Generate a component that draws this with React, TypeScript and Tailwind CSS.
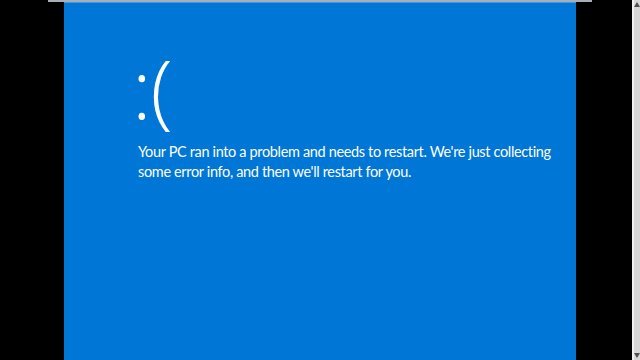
export default function App() {
  return (
    <div className="w-[640px] h-[360px] bg-black flex overflow-hidden">
      <div className="flex-1 flex flex-col">
        {/* thin window edge on top */}
        <div className="h-[2px] ml-[48px] mr-[40px] bg-[#a9adb8]" />
        <div className="flex-1 flex ml-[64px] mr-[56px]">
          <main className="flex-1 bg-[#0076d6] flex flex-col border-t border-[#3d9be6] pl-[74px] pt-[44px] text-white font-['Lato',sans-serif]">
            <div className="-ml-[6px] text-[82px] leading-[80px] font-light tracking-[-1px] font-['Open_Sans',sans-serif]">:(</div>
            <p className="mt-[15px] text-[14.5px] leading-[20px] font-normal tracking-[-0.35px] w-[425px]">
              Your PC ran into a problem and needs to restart. We're just collecting some error info,
              and then we'll restart for you.
            </p>
          </main>
        </div>
      </div>
      <aside className="w-[8px] bg-[#d6d6d6] border-l-2 border-[#f0f0f0] flex flex-col justify-between items-center py-[2px]">
        <svg width="6" height="5" viewBox="0 0 6 5">
          <path d="M3 0L6 5H0Z" fill="#505050" />
        </svg>
        <svg width="6" height="5" viewBox="0 0 6 5">
          <path d="M0 0H6L3 5Z" fill="#505050" />
        </svg>
      </aside>
    </div>
  );
}
